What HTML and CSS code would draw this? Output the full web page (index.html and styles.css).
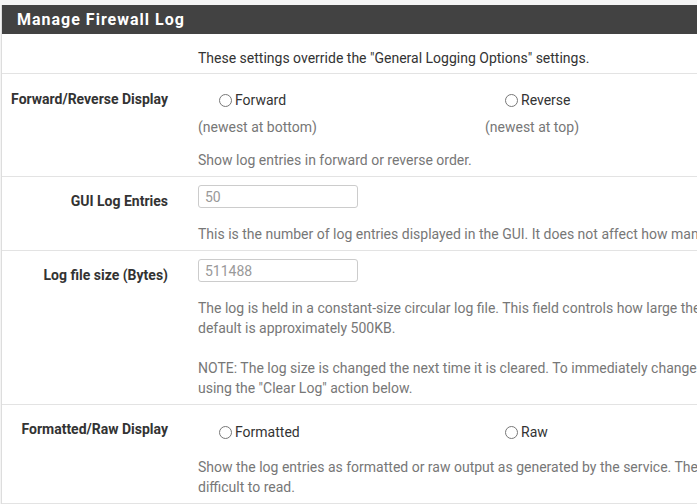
FILE: index.html
```html
<!DOCTYPE html>
<html lang="en">
<head>
  <meta charset="UTF-8" />
  <title>Manage Firewall Log</title>
  <link rel="stylesheet" href="styles.css">
</head>
<body>

<div class="panel">
  <div class="panel-heading">Manage Firewall Log</div>

  <div class="row intro">
    <div class="label"></div>
    <div class="content">These settings override the "General Logging Options" settings.</div>
  </div>

  <div class="row">
    <div class="label top">Forward/Reverse Display</div>
    <div class="content">
      <div class="choices">
        <div class="choice">
          <label><input type="radio" name="reverse" /> Forward</label>
          <span class="sub">(newest at bottom)</span>
        </div>
        <div class="choice">
          <label><input type="radio" name="reverse" /> Reverse</label>
          <span class="sub">(newest at top)</span>
        </div>
      </div>
      <p class="help">Show log entries in forward or reverse order.</p>
    </div>
  </div>

  <div class="row">
    <div class="label field">GUI Log Entries</div>
    <div class="content">
      <input type="text" class="text" placeholder="50" />
      <p class="help">This is the number of log entries displayed in the GUI. It does not affect how many entries are contained in the actual log files.</p>
    </div>
  </div>

  <div class="row">
    <div class="label field">Log file size (Bytes)</div>
    <div class="content">
      <input type="text" class="text" placeholder="511488" />
      <p class="help">The log is held in a constant-size circular log file. This field controls how large the log file is, and thus how many entries may exist inside the log. The<br>default is approximately 500KB.<br><br>NOTE: The log size is changed the next time it is cleared. To immediately change the log size, first save the options to set the size, then clear the log<br>using the "Clear Log" action below.</p>
    </div>
  </div>

  <div class="row">
    <div class="label top5">Formatted/Raw Display</div>
    <div class="content">
      <div class="choices five">
        <div class="choice">
          <label><input type="radio" name="format" /> Formatted</label>
        </div>
        <div class="choice">
          <label><input type="radio" name="format" /> Raw</label>
        </div>
      </div>
      <p class="help five">Show the log entries as formatted or raw output as generated by the service. The raw output will reveal more detailed information, but it is more<br>difficult to read.</p>
    </div>
  </div>
</div>

</body>
</html>
```

FILE: styles.css
```css
html, body { margin: 0; background: #f4f4f4; overflow: hidden; }
body {
  font-family: Roboto, "Noto Sans", sans-serif; font-size: 14px;
  color: #333; padding-top: 5px; width: 697px;
}
.panel {
  width: 1200px; margin-left: 1px; background: #fff;
  border-left: 1px solid #ddd;
}
.panel-heading {
  background: #424242; color: #fff; font-weight: bold;
  font-size: 16px; letter-spacing: 1px;
  height: 29px; line-height: 29px; padding-left: 15px;
}
.row {
  display: grid; grid-template-columns: 181px 1fr;
  border-bottom: 1px solid #e3e3e3;
}
.label {
  font-weight: bold; text-align: right; padding-right: 15px;
  line-height: 20px;
}
.label.top { padding-top: 15px; }
.label.top5 { padding-top: 14px; }
.label.field { padding-top: 14px; }
.content { padding: 0 15px; }
.intro .content { padding-top: 14px; padding-bottom: 5px; line-height: 20px; }
.choices { display: flex; padding-top: 16px; }
.choices.five { padding-top: 17px; }
.choice {
  width: 286px; display: flex; flex-direction: column;
  align-items: flex-start;
}
.choice label { display: flex; align-items: center; margin-left: 21px; line-height: 20px; }
.choice .sub { color: #777; margin-top: 7px; line-height: 20px; }
.choice:last-child .sub { margin-left: 1px; }
input[type="radio"] {
  appearance: none; width: 13px; height: 13px; margin: 1px 3px 0 0;
  border: 1px solid #777; border-radius: 50%; background: #fff;
}
.text {
  display: block; width: 160px; height: 23px; box-sizing: border-box;
  margin-top: 8px; padding: 0 6px; border: 1px solid #ccc;
  border-radius: 3px; font: inherit;
}
.text::placeholder { color: #999; }
.help {
  color: #777; margin: 0; padding: 16px 0 6px; line-height: 20px;
  white-space: nowrap;
}
.choices + .help { padding-top: 13px; }
.choices.five + .help { padding-top: 15px; }
```
